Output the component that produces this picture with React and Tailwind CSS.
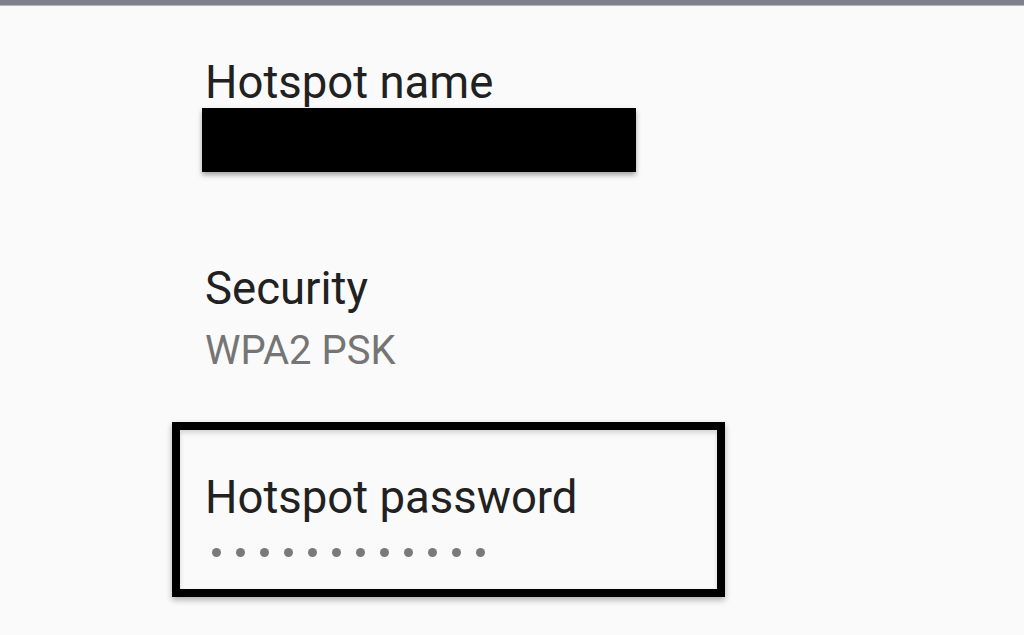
export default function App() {
  const dots = Array.from({ length: 12 });

  return (
    <div
      className="w-[1024px] h-[635px] overflow-hidden bg-[#fafafa] text-[#212121]"
      style={{ fontFamily: "Roboto, 'Liberation Sans', sans-serif" }}
    >
      {/* status bar edge */}
      <div className="h-[5px] bg-[#7f828b]" />
      <div className="h-[1px] bg-[#b4b6bb]" />

      <div className="flex flex-col items-start pl-[172px]">
        <div className="ml-[33px] mt-[51px] text-[45.5px] leading-[51px]">
          Hotspot name
        </div>
        <div className="ml-[30px] w-[434px] h-[64px] bg-black shadow-[0_3px_5px_rgba(0,0,0,0.35)]" />

        <div className="ml-[33px] mt-[91px] text-[45.5px] leading-[52px]">
          Security
        </div>
        <div className="ml-[33px] mt-[13px] text-[40px] leading-[46px] text-[#757575]">
          WPA2 PSK
        </div>

        <div className="mt-[48px] box-border w-[553px] h-[175px] border-[8px] border-black pl-[25px] pt-[42px] shadow-[0_3px_6px_rgba(0,0,0,0.3),inset_0_3px_5px_rgba(0,0,0,0.15)]">
          <div className="text-[45.5px] leading-[52px]">Hotspot password</div>
          <div className="ml-[7px] mt-[24px] flex gap-[15px]">
            {dots.map((_, i) => (
              <span key={i} className="block w-[9px] h-[9px] rounded-full bg-[#7a7a7a]" />
            ))}
          </div>
        </div>
      </div>
    </div>
  );
}
